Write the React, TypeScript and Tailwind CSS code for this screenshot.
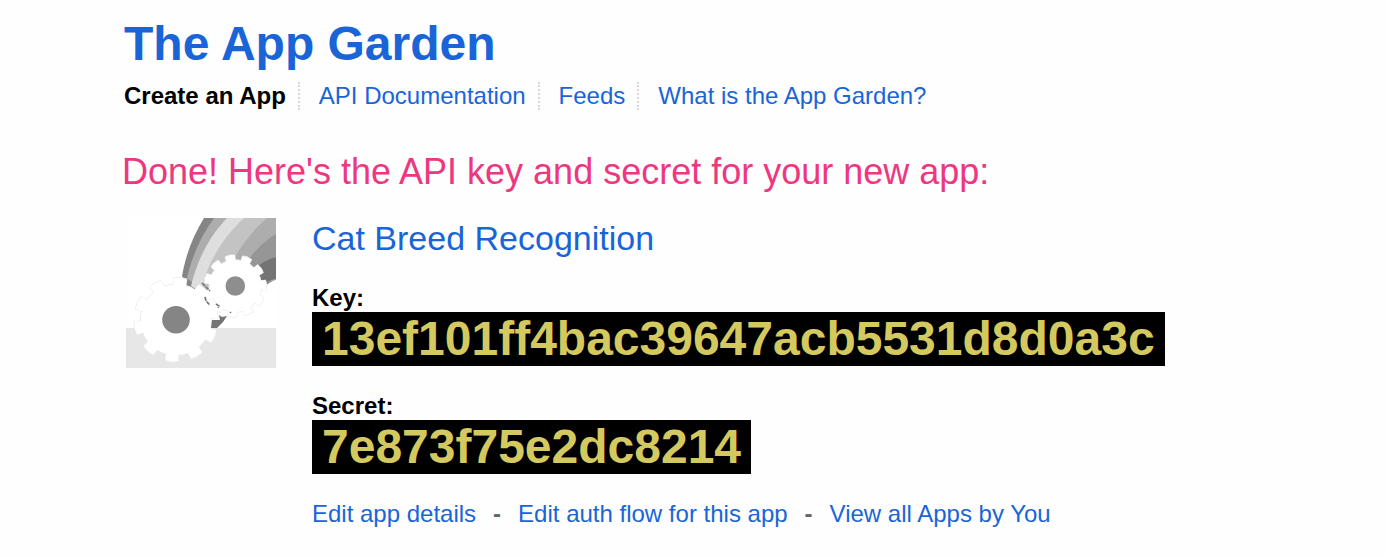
import React from "react";

function gearPath(cx: number, cy: number, root: number, tip: number, phase: number, teeth: number): string {
  const step = 360 / teeth;
  const points: string[] = [];
  const add = (r: number, deg: number) => {
    const a = (deg * Math.PI) / 180;
    points.push(`${(cx + r * Math.cos(a)).toFixed(1)} ${(cy + r * Math.sin(a)).toFixed(1)}`);
  };
  for (let i = 0; i < teeth; i++) {
    const mid = phase + i * step;
    add(root, mid - 10);
    add(tip, mid - 9);
    add(tip + 0.5, mid);
    add(tip, mid + 9);
    add(root, mid + 10);
    add(root + 0.3, mid + step / 2);
  }
  return `M${points.join("L")}Z`;
}

function GearsIcon() {
  return (
    <svg viewBox="0 0 150 150" className="size-[150px] shrink-0" role="img" aria-label="App icon">
      <rect width="150" height="150" fill="#ffffff" />
      <rect y="110" width="150" height="40" fill="#e7e7e7" />
      <path d="M78 0H150V61L110 85L62 70L56 58C60 36 67 18 78 0Z" fill="#858585" />
      <path d="M88 0H150V62L84 80L61 60C66 38 75 18 88 0Z" fill="#adadad" />
      <path d="M101 0H150V60L84 80L65 68C71 43 82 20 101 0Z" fill="#dedede" />
      <path d="M118 0H150V60L84 80L76 71C80 48 96 20 118 0Z" fill="#c3c3c3" />
      <path d="M141 0H150V60L95 80C96 55 117 20 141 0Z" fill="#adadad" />
      <path d="M150 16V60L105 80C108 55 130 28 150 16Z" fill="#969696" />
      <path d="M150 39V61C143 62 138 66 132 70L120 60C128 50 138 42 150 39Z" fill="#747474" />
      <path d={gearPath(109.3, 68, 26, 31, -100, 11)} fill="#ffffff" stroke="#ececec" strokeWidth="1" />
      <path d={gearPath(50, 101.7, 35.5, 42, 24, 10)} fill="#ffffff" stroke="#ececec" strokeWidth="1" />
      <path d={gearPath(109.3, 68, 25.5, 30.5, -100, 11)} fill="#ffffff" />
      <path d={gearPath(50, 101.7, 35, 41.5, 24, 10)} fill="#ffffff" />
      <path d="M76 65L80 69L84 73M79 79L80 83L84 87M90 86L93 88L92 90M104 94L105 95" fill="none" stroke="#777777" strokeWidth="1.6" strokeDasharray="4 1" />
      <path d="M85 110L86 102L94 102L93 97L96 99L101 98L97 104L91 110Z" fill="#747474" />
      <circle cx="109.3" cy="68" r="9.8" fill="#8e8e8e" />
      <circle cx="50" cy="101.7" r="13.8" fill="#858585" />
    </svg>
  );
}

const link = "text-[#1965d8] hover:underline";

export default function App() {
  return (
    <div className="min-h-screen bg-[#fefefe] pt-4 pr-6 pb-6 pl-31 font-['Liberation_Sans',Arial,sans-serif] text-2xl leading-7 text-black">
      <header>
        <h1 className="text-5xl leading-14 font-bold text-[#1965d8]">The App Garden</h1>
        <nav aria-label="App Garden" className="mt-[10px] flex flex-wrap">
          <span aria-current="page" className="border-r-2 border-dotted border-[#d8d8d8] pr-3 font-bold">
            Create an App
          </span>
          <a href="#docs" className={`${link} border-r-2 border-dotted border-[#d8d8d8] pr-3 pl-[19px]`}>
            API Documentation
          </a>
          <a href="#feeds" className={`${link} border-r-2 border-dotted border-[#d8d8d8] pr-3 pl-[19px]`}>
            Feeds
          </a>
          <a href="#about" className={`${link} pl-[19px]`}>
            What is the App Garden?
          </a>
        </nav>
      </header>
      <main className="-ml-[2px] pt-10">
        <h2 className="text-4xl leading-11 text-[#ed3780]">
          Done! Here's the API key and secret for your new app:
        </h2>
        <section className="mt-6 flex gap-9 pl-1">
          <GearsIcon />
          <div>
            <h3 className="text-[34px] leading-10">
              <a href="#app" className={link}>Cat Breed Recognition</a>
            </h3>
            <dl className="mt-[26px] font-bold">
              <dt>Key:</dt>
              <dd className="w-fit bg-black px-[10px] text-5xl leading-[54px] text-[#d4c95f]">
                13ef101ff4bac39647acb5531d8d0a3c
              </dd>
              <dt className="mt-[26px]">Secret:</dt>
              <dd className="w-fit bg-black px-[10px] text-5xl leading-[54px] text-[#d4c95f]">
                7e873f75e2dc8214
              </dd>
            </dl>
            <div className="mt-[26px] flex flex-wrap gap-x-[17px]">
              <a href="#details" className={link}>Edit app details</a>
              <span className="font-bold text-[#666666]">-</span>
              <a href="#auth" className={link}>Edit auth flow for this app</a>
              <span className="font-bold text-[#666666]">-</span>
              <a href="#apps" className={link}>View all Apps by You</a>
            </div>
          </div>
        </section>
      </main>
    </div>
  );
}
